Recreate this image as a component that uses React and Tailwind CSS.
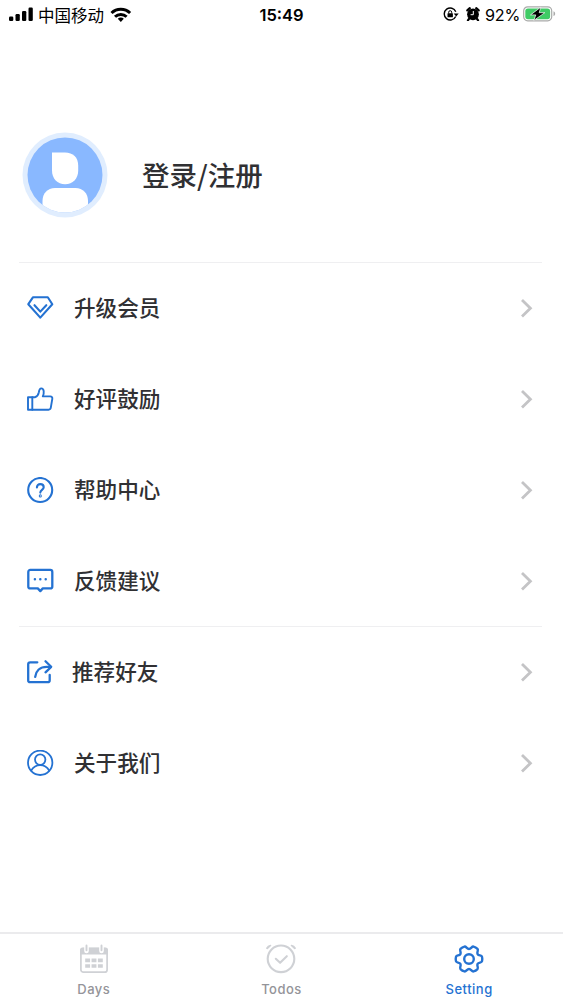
const stroke = {
  fill: 'none',
  stroke: 'currentColor',
  strokeLinecap: 'round',
  strokeLinejoin: 'round',
};

function MenuIcon({ width = 2.1, children }) {
  return (
    <svg viewBox="0 0 28 27" strokeWidth={width} {...stroke} className="h-[27px] w-7 shrink-0 text-[#2472d2]">
      {children}
    </svg>
  );
}

const DiamondIcon = () => (
  <MenuIcon>
    <path d="M6.9 2.3h14.9l4.5 6.9-12 13.4L2.300 9.200z" />
    <path d="M8.500 10.200l5.800 6.400 6-6.400" />
  </MenuIcon>
);

const LikeIcon = () => (
  <MenuIcon width={1.9}>
    <path d="M2 11.200h7.200c2-.8 3.200-2.600 3.600-4.800.3-2.200.9-4 2.500-4 2.900 0 3 4.800 1.500 8h7.500c1.400 0 2.300 1 2 2.400l-1.500 8.900c-.2 1.200-1 2-2.200 2H2z" />
    <path d="M6.300 11.200v12.500" />
  </MenuIcon>
);

const HelpIcon = () => (
  <MenuIcon>
    <circle cx="14.200" cy="13" r="12" />
    <path d="M10.900 10.400c0-2 1.400-3.300 3.400-3.300s3.400 1.300 3.400 3.100c0 2.600-3.400 2.700-3.400 5.400" />
    <circle cx="14.300" cy="18.900" r=".5" />
  </MenuIcon>
);

const FeedbackIcon = () => (
  <MenuIcon width={2.3}>
    <path d="M4.300 1.900h20c1.200 0 2 .8 2 2v14.500c0 1.200-.8 2-2 2h-7.500l-2.500 2.700-2.500-2.700H4.300c-1.200 0-2-.8-2-2V3.900c0-1.200.8-2 2-2z" />
    <path d="M8.900 11.200h.01M14.300 11.200h.01M19.700 11.200h.01" strokeWidth="2.500" />
  </MenuIcon>
);

const ShareIcon = () => (
  <MenuIcon width={2.3}>
    <path d="M11.300 3.300H4.200c-1.200 0-2 .8-2 2v15.900c0 1.200.8 2 2 2h17.500c1.200 0 2-.8 2-2V16" />
    <path d="M9.200 17.800c.7-6 4.800-10 11.500-10h4" />
    <path d="M19.500 2.200l5.700 5.600-5.700 5.500" />
  </MenuIcon>
);

const AboutIcon = () => (
  <MenuIcon width={1.8}>
    <circle cx="14.200" cy="12.800" r="12.200" />
    <circle cx="14.200" cy="9.600" r="5.200" />
    <path d="M5.200 20.500c2-3.300 5-5.300 9-5.300s7 2 9 5.300" />
  </MenuIcon>
);

const menuGroups = [
  [
    { label: '升级会员', Icon: DiamondIcon },
    { label: '好评鼓励', Icon: LikeIcon },
    { label: '帮助中心', Icon: HelpIcon },
    { label: '反馈建议', Icon: FeedbackIcon },
  ],
  [
    { label: '推荐好友', Icon: ShareIcon, gap: 'ml-[18px]' },
    { label: '关于我们', Icon: AboutIcon },
  ],
];

function StatusBar() {
  return (
    <div className="grid h-[29px] grid-cols-3 items-center text-black">
      <div className="flex items-center pl-[9px]">
        <svg viewBox="0 0 25 15" className="h-[15px] w-[25px]">
          <rect x="0" y="9.500" width="4.300" height="4.500" rx="1.200" />
          <rect x="6.500" y="7" width="4.300" height="7" rx="1.200" />
          <rect x="13" y="4" width="4.300" height="10" rx="1.200" />
          <rect x="19.500" y="0.500" width="4.300" height="13.500" rx="1.200" />
        </svg>
        <span className="ml-1 pt-[3px] text-[16.500px] leading-none whitespace-nowrap">中国移动</span>
        <svg viewBox="0 0 22 16" className="ml-[6px] h-4 w-[22px] shrink-0">
          <g fill="none" stroke="currentColor" strokeWidth="3">
            <path d="M1.500 6a13.300 13.300 0 0 1 18.600 0" />
            <path d="M5 9.800a8.300 8.300 0 0 1 11.600 0" />
          </g>
          <path d="M10.800 15l-3-3.200a4.200 4.200 0 0 1 6 0z" />
        </svg>
      </div>
      <div className="pt-px text-center text-[16.500px] leading-none font-semibold">15:49</div>
      <div className="flex items-center justify-end pr-[7px]">
        <svg viewBox="0 0 16 14" className="h-[14px] w-4">
          <path d="M12.700 9.500a6 6 0 1 1 .1-4.800" fill="none" stroke="currentColor" strokeWidth="1.400" />
          <path d="M10.700 6.500h5l-2.500 3z" />
          <rect x="4.500" y="6.200" width="5.400" height="4.100" rx=".6" />
          <path d="M5.700 6.500V5.200a1.500 1.500 0 0 1 3 0v1.300" fill="none" stroke="currentColor" />
        </svg>
        <svg viewBox="0 0 14 14" className="ml-[7px] h-[14px] w-[14px]">
          <circle cx="7" cy="7.300" r="5.900" />
          <path d="M1.300 3.400l2.500-2.200M12.700 3.400l-2.500-2.200M2.900 12l-1 1.300M11.100 12l1 1.300" stroke="currentColor" strokeWidth="2.200" strokeLinecap="round" />
          <path d="M7.300 4v3.700H4.600" fill="none" stroke="white" />
        </svg>
        <span className="ml-[5px] pt-px text-[16.200px] leading-none tracking-[-0.300px]">92%</span>
        <svg viewBox="0 0 33 16" className="ml-[3px] h-4 w-[33px]">
          <rect x=".7" y=".8" width="28" height="14" rx="4" fill="none" stroke="#a9aaa9" strokeWidth="1.200" />
          <rect x="2.300" y="2.400" width="24.800" height="10.800" rx="2.600" fill="#3fcb65" />
          <path d="M30.500 5.200c2.200.8 2.200 4 0 4.800z" fill="#a9aaa9" />
          <path d="M17.800 1.200L7.500 8.900h5.300l-2 5.500L21.800 6.700h-5.600z" stroke="white" strokeWidth=".7" />
        </svg>
      </div>
    </div>
  );
}

function Avatar() {
  return (
    <svg viewBox="0 0 86 86" className="size-[86px] shrink-0">
      <defs>
        <clipPath id="avatar-clip">
          <circle cx="43" cy="43" r="37.500" />
        </clipPath>
      </defs>
      <circle cx="43" cy="43" r="42.500" fill="#e0edfe" />
      <circle cx="43" cy="43" r="37.500" fill="#89b8ff" />
      <g fill="white" clipPath="url(#avatar-clip)">
        <path d="M30 20.500h13c8 0 13.200 5 13.200 13v5c0 8-5.400 13.800-13.100 13.800S30 46.500 30 38.500z" />
        <path d="M20.500 86V69c0-7.500 5-13 12.500-13h20.500c7.500 0 12.500 5.500 12.500 13v17z" />
      </g>
    </svg>
  );
}

function MenuRow({ label, Icon, gap = 'ml-5' }) {
  return (
    <li className="flex h-[91px] items-center pr-[9px] pl-[7px]">
      <Icon />
      <span className={`${gap} text-[21.600px] leading-none font-medium text-[#303033]`}>{label}</span>
      <svg viewBox="0 0 14 21" className="ml-auto h-[21px] w-[14px] text-[#c4c4c6]" fill="none" stroke="currentColor" strokeWidth="2.800">
        <path d="M3 2l8.400 8.200L3 18.400" />
      </svg>
    </li>
  );
}

const CalendarIcon = () => (
  <svg viewBox="0 0 30 30" className="size-[30px]">
    <rect x="1.900" y="4.500" width="26.200" height="23.700" rx="2.500" fill="none" stroke="#cfd1d5" strokeWidth="1.700" />
    <path d="M1 10.500V6a2.500 2.500 0 0 1 2.500-2.500h23A2.500 2.500 0 0 1 29 6v4.500z" fill="#cfd1d5" />
    <path d="M7.500 2v5M22.500 2v5" stroke="white" strokeWidth="4.600" strokeLinecap="round" />
    <path d="M7.500 1.500v4.800M22.500 1.500v4.800" stroke="#cfd1d5" strokeWidth="1.900" strokeLinecap="round" />
    <path d="M6.200 16.400h17.600M6.200 22h17.600" stroke="#cfd1d5" strokeWidth="3.600" strokeDasharray="4.900 1.450" />
  </svg>
);

const ClockIcon = () => (
  <svg viewBox="0 0 32 30" className="h-[30px] w-8" fill="none" stroke="#cfd1d5" strokeLinecap="round" strokeLinejoin="round">
    <circle cx="16" cy="14.800" r="13.300" strokeWidth="2.100" />
    <path d="M10.800 14.800l4.300 4 6.700-6.600" strokeWidth="2.100" />
    <path d="M1.900 4.200c.8-1.400 2-2.300 3.600-2.700L2.300 4.400zM30.100 4.200c-.8-1.400-2-2.300-3.600-2.700l3.200 2.900z" strokeWidth="1.600" />
  </svg>
);

const GearIcon = () => (
  <svg viewBox="0 0 30 30" className="size-[30px]" fill="none" stroke="currentColor" strokeWidth="2.400" strokeLinejoin="round">
    <path d="M10.500 2.600C12.200 2.200 12.800 5 15 5s2.800-2.800 4.500-2.400c1.600.4 3 1.300 4 2.300 1.300 1.400-1 3.300.1 5.200 1.100 1.900 3.900.8 4.400 2.600.4 1.500.4 3.100 0 4.600-.5 1.800-3.300.7-4.400 2.600-1.100 1.900 1.200 3.800-.1 5.200-1 1-2.400 1.900-4 2.300C17.800 27.800 17.200 25 15 25s-2.800 2.800-4.500 2.400c-1.600-.4-3-1.300-4-2.300-1.300-1.400 1-3.300-.1-5.200-1.100-1.900-3.900-.8-4.400-2.600-.4-1.500-.4-3.100 0-4.600.5-1.800 3.300-.7 4.400-2.600 1.100-1.900-1.200-3.800.1-5.200 1-1 2.400-1.900 4-2.300z" />
    <circle cx="15" cy="15" r="4.800" />
  </svg>
);

const tabs = [
  { label: 'Days', Icon: CalendarIcon },
  { label: 'Todos', Icon: ClockIcon },
  { label: 'Setting', Icon: GearIcon, active: true },
];

function TabBar() {
  return (
    <nav className="grid h-[68px] grid-cols-3 border-t-2 border-[#ebebed]">
      {tabs.map(({ label, Icon, active }) => (
        <div
          key={label}
          className={`flex flex-col items-center pt-[10px] font-medium ${active ? 'text-[#2472d2]' : 'text-[#949499]'}`}
        >
          <Icon />
          <span className="mt-[9px] text-[13px] leading-none tracking-[0.500px]">{label}</span>
        </div>
      ))}
    </nav>
  );
}

export default function App() {
  return (
    <div className="flex h-[1000px] w-[563px] flex-col overflow-hidden bg-white font-[Inter,'Noto_Sans_CJK_SC',sans-serif]">
      <StatusBar />
      <header className="mt-[103px] flex h-[86px] items-center pl-[22px]">
        <Avatar />
        <h1 className="ml-[34px] font-['Noto_Sans_CJK_SC',sans-serif] text-[27.500px] leading-none font-medium text-[#303033]">
          登录/注册
        </h1>
      </header>
      <main className="mt-[45px] flex-1 pr-[21px] pl-[19px]">
        {menuGroups.map((group, i) => (
          <ul key={i} className="relative shadow-[0_-1px_0_#efeff1]">
            {group.map((item) => (
              <MenuRow key={item.label} {...item} />
            ))}
          </ul>
        ))}
      </main>
      <TabBar />
    </div>
  );
}
